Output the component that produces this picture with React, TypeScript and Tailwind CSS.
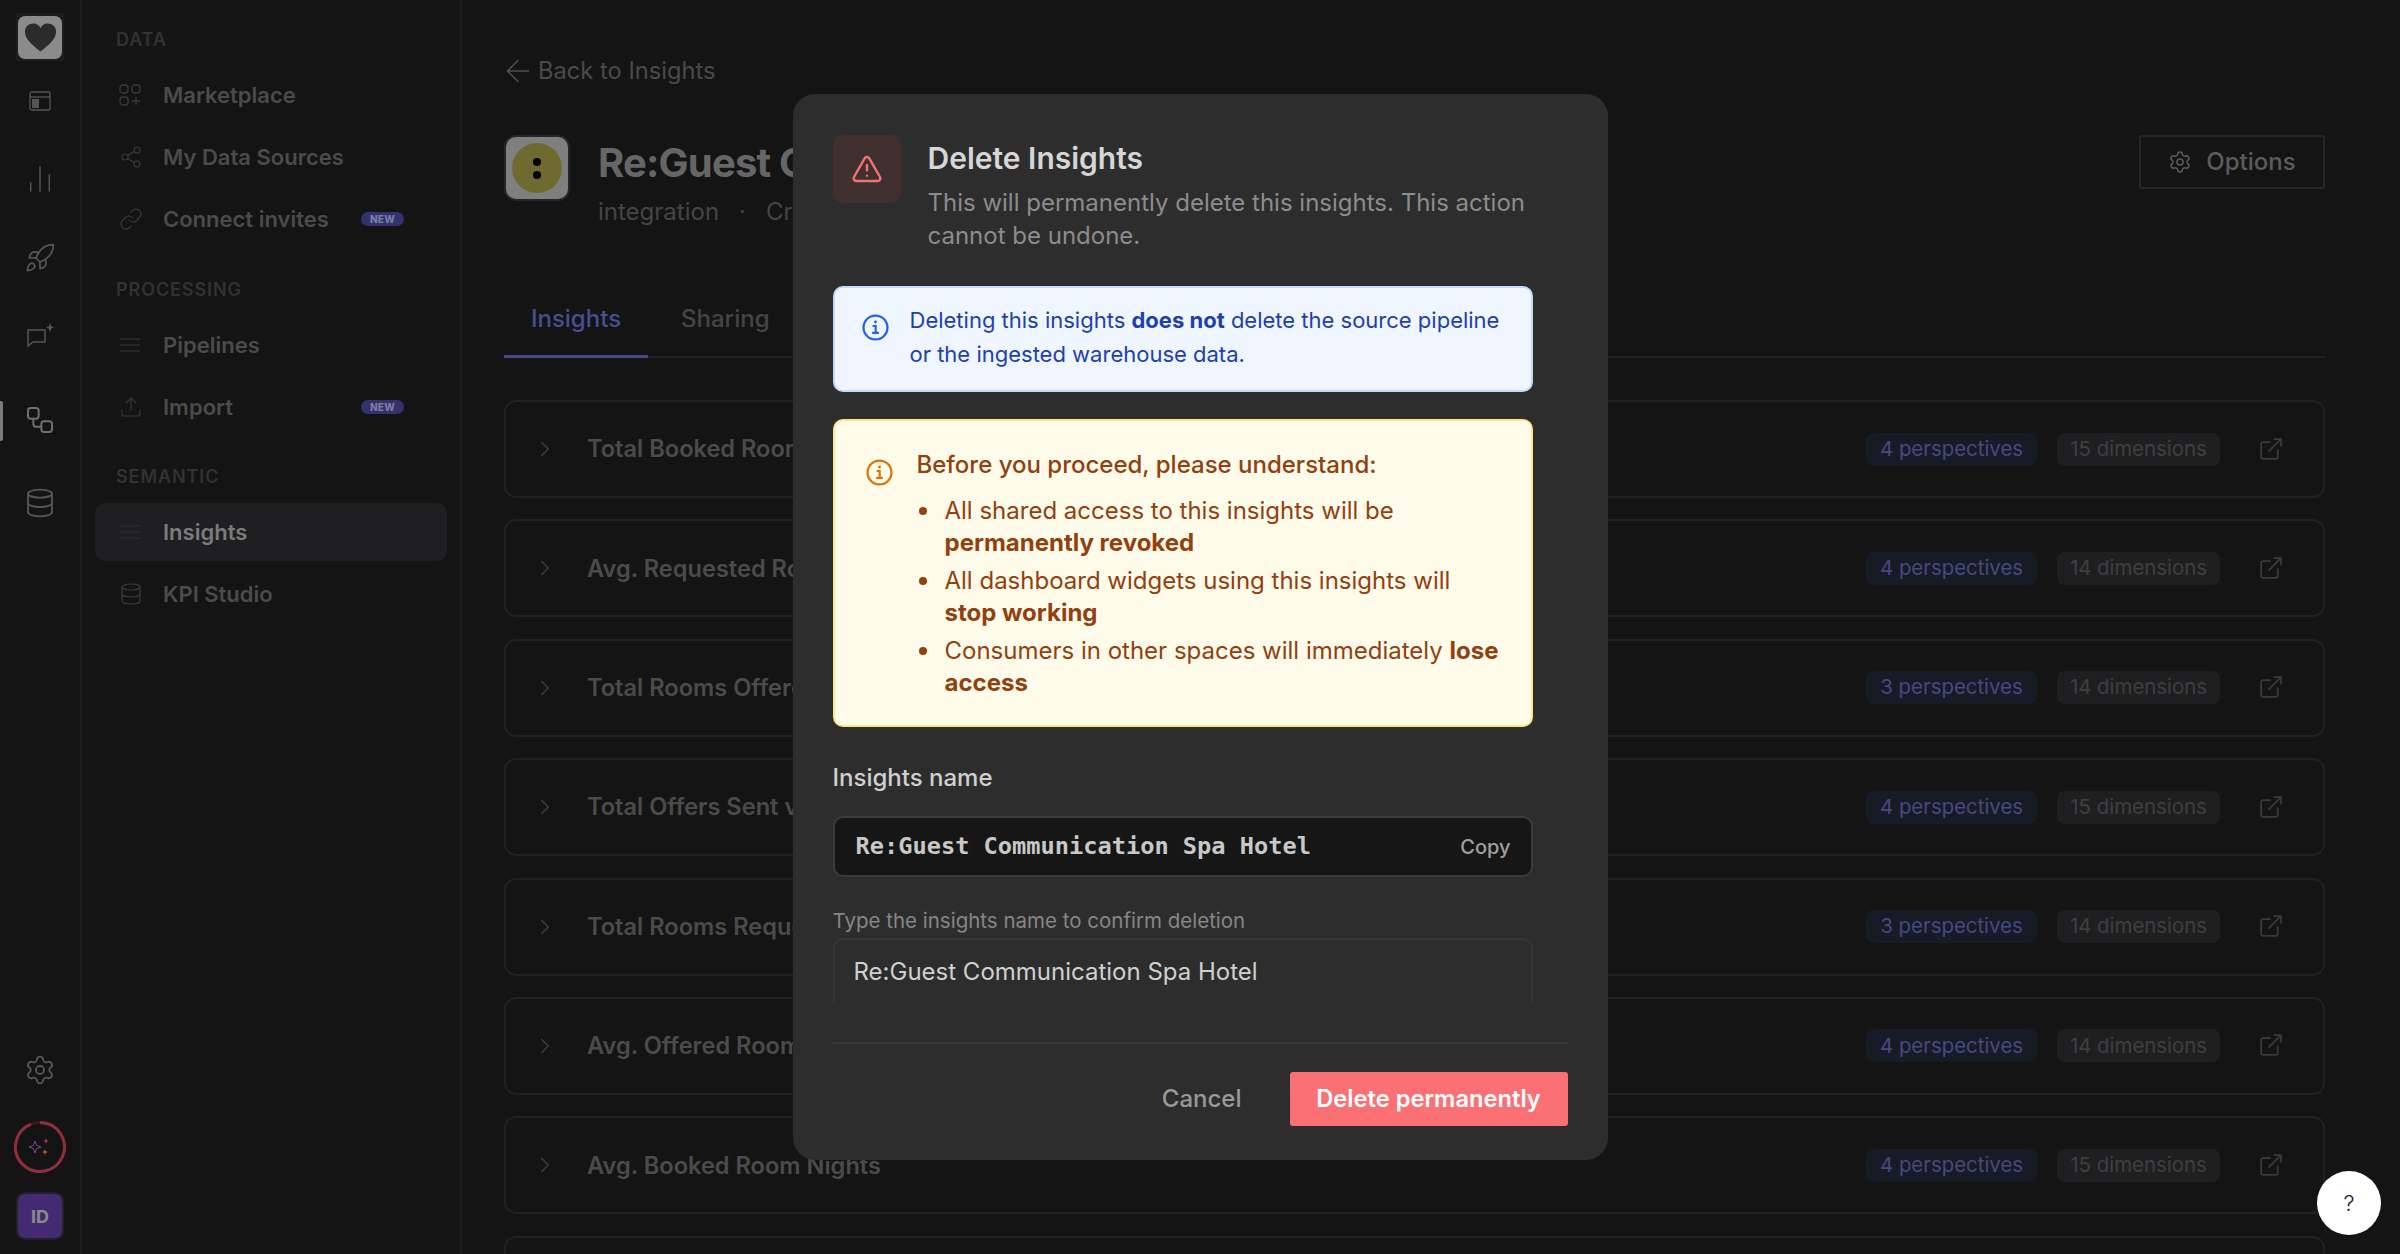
import {
  ArrowLeft,
  ChartNoAxesColumn,
  ChevronRight,
  Database,
  Link as LinkIcon,
  Rocket,
  Settings,
  Share2,
  TriangleAlert,
  Upload,
  Workflow,
} from "lucide-react";

const rows = [
  { name: "Total Booked Room Nights", perspectives: 4, dimensions: 15 },
  { name: "Avg. Requested Room Nights", perspectives: 4, dimensions: 14 },
  { name: "Total Rooms Offered", perspectives: 3, dimensions: 14 },
  { name: "Total Offers Sent via Email", perspectives: 4, dimensions: 15 },
  { name: "Total Rooms Requested", perspectives: 3, dimensions: 14 },
  { name: "Avg. Offered Room Nights", perspectives: 4, dimensions: 14 },
  { name: "Avg. Booked Room Nights", perspectives: 4, dimensions: 15 },
  { name: "", perspectives: 0, dimensions: 0 },
];

function LinesIcon({ className }: { className?: string }) {
  return (
    <svg viewBox="0 0 22 16" className={className} fill="none" stroke="currentColor" strokeWidth="1.2">
      <path d="M1 2h20M1 8h20M1 14h20" />
    </svg>
  );
}

function MarketIcon() {
  return (
    <svg viewBox="0 0 22 22" className="w-[22px] h-[22px]" fill="none" stroke="currentColor" strokeWidth="1.3">
      <rect x="1" y="1" width="8" height="8" rx="3" />
      <rect x="13" y="1" width="8" height="8" rx="3" />
      <rect x="1" y="13" width="8" height="8" rx="3" />
      <path d="M17 13v8M13 17h8" />
    </svg>
  );
}

function BrowserIcon() {
  return (
    <svg viewBox="0 0 22 20" className="w-[22px] h-[20px]" fill="none" stroke="currentColor" strokeWidth="1.3">
      <rect x="1" y="1" width="20" height="18" rx="2" />
      <path d="M1 6h20" />
      <rect x="3" y="8" width="7" height="9" fill="currentColor" stroke="none" />
    </svg>
  );
}

function ChatSparkIcon() {
  return (
    <svg viewBox="0 0 29 26" className="w-[29px] h-[26px]" fill="none" stroke="currentColor" strokeWidth="1.5">
      <path d="M2 8h17v12H7l-5 4z" />
      <path d="M24 1l1.2 3.3L28 5.5l-2.8 1.2L24 10l-1.2-3.3L20 5.5l2.8-1.2z" fill="currentColor" stroke="none" />
    </svg>
  );
}

function OpenIcon() {
  return (
    <svg viewBox="0 0 24 24" className="ml-[38px] w-[25px] h-[25px] text-[#3a3a3a]" fill="none" stroke="currentColor" strokeWidth="1.7">
      <path d="M12 5H5a2 2 0 0 0-2 2v12a2 2 0 0 0 2 2h12a2 2 0 0 0 2-2v-7" />
      <path d="M10 14 22 2M15 2h7v7" />
    </svg>
  );
}

function SerifInfo({ className }: { className?: string }) {
  return (
    <svg viewBox="0 0 28 28" className={className} fill="none" stroke="currentColor" strokeWidth="2.4">
      <circle cx="14" cy="14" r="12.4" />
      <path d="M11 12.5h3.2v7M10.5 19.6h7" strokeWidth="2.2" />
      <circle cx="14" cy="8.3" r="1.5" fill="currentColor" stroke="none" />
    </svg>
  );
}

function SideItem({ icon, label, badge, active }: { icon: React.ReactNode; label: string; badge?: boolean; active?: boolean }) {
  return (
    <div className={`flex items-center h-[58px] pl-[24px] mb-[4px] rounded-[10px] ${active ? "bg-[#1f1f21] text-[#7c7c7c]" : "text-[#4b4b4b]"}`}>
      <span className="w-[44px] flex text-[#3a3a3a]">{icon}</span>
      <span className="text-[22px] font-semibold">{label}</span>
      {badge && (
        <span className="ml-auto mr-[43px] h-[14px] w-[43px] rounded-full bg-[#34316f] text-[#7d7d9e] text-[10px] font-extrabold flex items-center justify-center tracking-[0.03em]">
          NEW
        </span>
      )}
    </div>
  );
}

function SideLabel({ children }: { children: string }) {
  return <div className="pl-[21px] h-[26px] leading-[26px] text-[18px] font-semibold tracking-[0.05em] text-[#323232] mb-[13px]">{children}</div>;
}

function Rail() {
  return (
    <aside className="w-[82px] shrink-0 border-r-2 border-[#1e1e1e] flex flex-col items-center relative text-[#555555]">
      <div className="mt-[13px] w-[48px] h-[48px] bg-[#1d1d1d] flex items-center justify-center">
        <div className="w-[44px] h-[43px] rounded-[7px] bg-[#8b8b8b] flex items-center justify-center text-[#2b2b2b]">
          <svg viewBox="0 0 24 22" className="w-[35px] h-[31px]" fill="currentColor">
            <path d="M12 21C5 15.5 1 12 1 7a5.8 5.8 0 0 1 11-2.6A5.8 5.8 0 0 1 23 7c0 5-4 8.500-11 14z" />
          </svg>
        </div>
      </div>
      <div className="mt-[30px] h-[20px] flex items-center"><BrowserIcon /></div>
      <div className="mt-[52px] h-[32px] flex items-center"><ChartNoAxesColumn size={32} strokeWidth={1.1} /></div>
      <div className="mt-[47px] h-[32px] flex items-center"><Rocket size={32} strokeWidth={1.3} /></div>
      <div className="mt-[48px] h-[26px] flex items-center"><ChatSparkIcon /></div>
      <div className="mt-[56px] h-[32px] flex items-center text-[#6e6e6e]"><Workflow size={32} strokeWidth={1.5} /></div>
      <div className="mt-[51px] h-[32px] flex items-center"><Database size={32} strokeWidth={1.4} /></div>
      <div className="absolute left-0 top-[401px] w-[3px] h-[40px] bg-[#7b7b7b] rounded-r-[2px]" />
      <div className="mt-auto flex flex-col items-center">
        <Settings size={32} strokeWidth={1.4} />
        <div className="mt-[35px] w-[52px] h-[52px] relative flex items-center justify-center">
          <svg viewBox="0 0 52 52" className="absolute inset-0 w-[52px] h-[52px]" fill="none">
            <circle cx="26" cy="26" r="24.5" stroke="#3a1a1f" strokeWidth="3" />
            <path d="M26 1.500A24.500 24.500 0 1 1 17 3.200" stroke="#8f2f3a" strokeWidth="3" />
          </svg>
          <svg viewBox="0 0 24 20" className="w-[24px] h-[20px]">
            <path d="M7 4l1.600 4.400L13 10l-4.400 1.600L7 16l-1.600-4.400L1 10l4.400-1.600z" fill="none" stroke="#7a4a8a" strokeWidth="1" />
            <path d="M18 1l.8 2.200L21 4l-2.200.8L18 7l-.8-2.200L15 4l2.200-.8z" fill="#a13a48" />
            <path d="M17 12l.8 2.200L20 15l-2.200.8L17 18l-.8-2.200L14 15l2.200-.8z" fill="#b5651d" />
          </svg>
        </div>
        <div className="mt-[19px] mb-[14px] w-[48px] h-[48px] rounded-[9px] border-2 border-[#222228] bg-[#432a72] text-[#8b8b8b] text-[18px] font-bold flex items-center justify-center">
          ID
        </div>
      </div>
    </aside>
  );
}

function Sidebar() {
  return (
    <aside className="w-[380px] shrink-0 border-r-2 border-[#1e1e1e] pl-[13px] pr-[13px] pt-[27px]">
      <SideLabel>DATA</SideLabel>
      <SideItem icon={<MarketIcon />} label="Marketplace" />
      <SideItem icon={<Share2 size={24} strokeWidth={1.1} />} label="My Data Sources" />
      <SideItem icon={<LinkIcon size={24} strokeWidth={1.2} />} label="Connect invites" badge />
      <div className="h-[25px]" />
      <SideLabel>PROCESSING</SideLabel>
      <SideItem icon={<LinesIcon className="w-[22px] h-[16px]" />} label="Pipelines" />
      <SideItem icon={<Upload size={24} strokeWidth={1.1} />} label="Import" badge />
      <div className="h-[24px]" />
      <SideLabel>SEMANTIC</SideLabel>
      <SideItem icon={<LinesIcon className="w-[22px] h-[16px] opacity-70" />} label="Insights" active />
      <SideItem icon={<Database size={24} strokeWidth={1.2} />} label="KPI Studio" />
    </aside>
  );
}

function Row({ name, perspectives, dimensions }: { name: string; perspectives: number; dimensions: number }) {
  return (
    <div className="h-[98px] shrink-0 rounded-[12px] border-2 border-[#212121] flex items-center pl-[26px] pr-[40px]">
      {name && (
        <>
          <ChevronRight size={26} strokeWidth={1.4} className="text-[#3c3c3c]" />
          <span className="ml-[29px] text-[23.600px] font-semibold text-[#4b4b4b] whitespace-nowrap">{name}</span>
          <span className="ml-auto h-[33px] w-[171px] rounded-[8px] bg-[#171b26] text-[#454a80] text-[20.400px] flex items-center justify-center">
            {perspectives} perspectives
          </span>
          <span className="ml-[20px] h-[33px] w-[163px] rounded-[8px] bg-[#1f1f21] text-[#3f3f3f] text-[20.400px] flex items-center justify-center">
            {dimensions} dimensions
          </span>
          <OpenIcon />
        </>
      )}
    </div>
  );
}

function Main() {
  return (
    <main className="flex-1 min-w-0 pl-[42px] pr-[75px] flex flex-col overflow-hidden">
      <div className="mt-[55px] flex items-center h-[32px] text-[#4a4a4a]">
        <ArrowLeft size={36} strokeWidth={1} className="ml-[-4px] mr-[2px] text-[#4f4f4f]" />
        <span className="text-[23.700px]">Back to Insights</span>
      </div>
      <div className="mt-[48px] flex items-start">
        <div className="w-[66px] h-[66px] rounded-[12px] border-2 border-[#262626] bg-[#7f7f7f] flex items-center justify-center">
          <div className="w-[50px] h-[50px] rounded-full bg-[#6f6a30] flex flex-col items-center justify-center gap-[5px]">
            <span className="w-[8px] h-[8px] rounded-full bg-black" />
            <span className="w-[8px] h-[8px] rounded-full bg-black" />
          </div>
        </div>
        <div className="ml-[28px] pt-[3px]">
          <div className="text-[40px] leading-[50px] font-bold tracking-[-0.02em] text-[#666666] whitespace-nowrap">Re:Guest Communication Spa Hotel</div>
          <div className="mt-[8px] text-[24px] leading-[32px] text-[#454545] flex">
            <span>integration</span>
            <span className="mx-[20px]">·</span>
            <span>Created</span>
          </div>
        </div>
        <button className="ml-auto h-[54px] w-[186px] rounded-[3px] border-2 border-[#262626] flex items-center justify-center gap-[14px] text-[24px] font-medium text-[#5c5c5c]">
          <Settings size={24} strokeWidth={1.5} />
          Options
        </button>
      </div>
      <div className="mt-[55px] flex h-[75px] border-b-2 border-[#212121] text-[24px] font-medium">
        <div className="w-[144px] h-[75px] border-b-[3px] border-[#474b8c] text-[#494e90] flex items-center justify-center">Insights</div>
        <div className="ml-[33px] h-[72px] flex items-center text-[#454545]">Sharing</div>
      </div>
      <div className="mt-[42px] flex flex-col gap-[21.4px]">
        {rows.map((row, i) => (
          <Row key={i} {...row} />
        ))}
      </div>
    </main>
  );
}

function Bullet({ children }: { children: React.ReactNode }) {
  return (
    <li className="flex">
      <span className="w-[26px] shrink-0 pt-[12px]">
        <span className="block w-[8px] h-[8px] rounded-full bg-[#92400e]" />
      </span>
      <span>{children}</span>
    </li>
  );
}

function DeleteModal() {
  return (
    <div className="fixed inset-0 flex items-center justify-center">
      <div className="w-[815px] h-[1066px] rounded-[22px] bg-[#2d2d2d] pt-[41px] px-[40px] flex flex-col">
        <div className="h-[867px] overflow-hidden pr-[35px]">
          <div className="flex">
            <div className="w-[68px] h-[68px] shrink-0 rounded-[10px] bg-[#403030] flex items-center justify-center">
              <TriangleAlert size={32} strokeWidth={1.8} className="text-[#f87171]" />
            </div>
            <div className="ml-[27px]">
              <div className="mt-[5px] text-[30px] leading-[36px] font-semibold text-[#d6d6d6]">Delete Insights</div>
              <p className="mt-[11px] text-[24px] leading-[32.500px] text-[#8c8c8c]">
                This will permanently delete this insights. This action cannot be undone.
              </p>
            </div>
          </div>
          <div className="mt-[34px] h-[106px] rounded-[10px] border-2 border-[#bfdbfe] bg-[#eff6ff] flex pl-[27px] pr-[20px] pt-[15px]">
            <SerifInfo className="w-[27px] h-[27px] mt-[11px] shrink-0 text-[#2563eb]" />
            <p className="ml-[21px] text-[22px] leading-[34px] text-[#1e40af]">
              Deleting this insights <strong className="font-bold">does not</strong> delete the source pipeline or the ingested warehouse data.
            </p>
          </div>
          <div className="mt-[27px] h-[308px] rounded-[10px] border-2 border-[#fde68a] bg-[#fffbeb] flex pl-[31px] pr-[27px] pt-[28px] text-[#92400e]">
            <SerifInfo className="w-[27px] h-[27px] mt-[10px] shrink-0 text-[#d97706]" />
            <div className="ml-[24px]">
              <div className="text-[24px] leading-[32px] font-medium">Before you proceed, please understand:</div>
              <ul className="mt-[14px] pl-[2px] text-[24px] leading-[32px] flex flex-col gap-[6px]">
                <Bullet>All shared access to this insights will be <strong className="font-bold">permanently revoked</strong></Bullet>
                <Bullet>All dashboard widgets using this insights will <strong className="font-bold">stop working</strong></Bullet>
                <Bullet>Consumers in other spaces will immediately <strong className="font-bold">lose access</strong></Bullet>
              </ul>
            </div>
          </div>
          <div className="mt-[37px] text-[24px] leading-[28px] font-medium text-[#d0d0d0]">Insights name</div>
          <div className="mt-[24px] h-[61px] rounded-[10px] border-2 border-[#3b3b3b] bg-[#161616] flex items-center pl-[21px] pr-[20px]">
            <span className="font-['DejaVu_Sans_Mono',monospace] text-[23.650px] font-bold text-[#c8c8c8] whitespace-nowrap">Re:Guest Communication Spa Hotel</span>
            <span className="ml-auto text-[20px] font-medium text-[#a0a0a0]">Copy</span>
          </div>
          <div className="mt-[31px] text-[20.500px] leading-[26px] text-[#868686]">Type the insights name to confirm deletion</div>
          <div className="mt-[4px] h-[80px] rounded-[10px] border-2 border-[#363636] pl-[19px] pt-[17px] text-[24px] leading-[30px] text-[#d0d0d0]">
            Re:Guest Communication Spa Hotel
          </div>
        </div>
        <div className="mt-[40px] border-t-2 border-[#383838] flex items-center justify-end pt-[28px]">
          <button className="text-[24px] font-medium text-[#999999] mr-[48px]">Cancel</button>
          <button className="w-[278px] h-[54px] rounded-[3px] bg-[#fb7075] text-[23.700px] font-semibold text-white">Delete permanently</button>
        </div>
      </div>
    </div>
  );
}

export default function App() {
  return (
    <div className="h-[1254px] w-[2400px] overflow-hidden bg-[#141414] flex font-['Inter',sans-serif] relative">
      <Rail />
      <Sidebar />
      <Main />
      <DeleteModal />
      <button className="fixed left-[2317px] top-[1171px] w-[64px] h-[64px] rounded-full bg-white text-[#222222] text-[22px] font-light flex items-center justify-center">
        ?
      </button>
    </div>
  );
}
